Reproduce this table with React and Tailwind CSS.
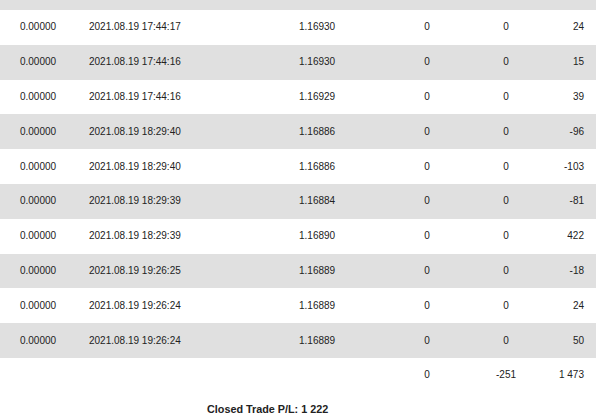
import React from "react";

const rows = [
  ["0.00000", "2021.08.19 17:44:17", "1.16930", "0", "0", "24"],
  ["0.00000", "2021.08.19 17:44:16", "1.16930", "0", "0", "15"],
  ["0.00000", "2021.08.19 17:44:16", "1.16929", "0", "0", "39"],
  ["0.00000", "2021.08.19 18:29:40", "1.16886", "0", "0", "-96"],
  ["0.00000", "2021.08.19 18:29:40", "1.16886", "0", "0", "-103"],
  ["0.00000", "2021.08.19 18:29:39", "1.16884", "0", "0", "-81"],
  ["0.00000", "2021.08.19 18:29:39", "1.16890", "0", "0", "422"],
  ["0.00000", "2021.08.19 19:26:25", "1.16889", "0", "0", "-18"],
  ["0.00000", "2021.08.19 19:26:24", "1.16889", "0", "0", "24"],
  ["0.00000", "2021.08.19 19:26:24", "1.16889", "0", "0", "50"],
];

function Row({ cells, gray }) {
  return (
    <div
      className={
        "flex items-center h-[34.8px] w-[596px] " +
        (gray ? "bg-[#e0e0e0]" : "bg-white")
      }
    >
      <div className="w-[76px] text-center">{cells[0]}</div>
      <div className="w-[150px] pl-[13px] text-left">{cells[1]}</div>
      <div className="w-[160px] pl-[73px] text-left">{cells[2]}</div>
      <div className="w-[82px] text-center">{cells[3]}</div>
      <div className="w-[76px] text-center">{cells[4]}</div>
      <div className="flex-1 pr-[12px] text-right">{cells[5]}</div>
    </div>
  );
}

export default function App() {
  return (
    <div
      className="w-[600px] h-[419px] bg-white text-[#222] text-[10px] leading-none overflow-hidden"
      style={{ fontFamily: '"Liberation Sans", Arial, sans-serif' }}
    >
      <div className="h-[10px] w-[596px] bg-[#e0e0e0]" />
      {rows.map((r, i) => (
        <Row key={i} cells={r} gray={i % 2 === 1} />
      ))}
      <Row cells={["", "", "", "0", "-251", "1 473"]} gray={false} />
      <div className="pl-[207px] pt-[11px] font-bold text-[10.8px]">
        Closed Trade P/L: 1 222
      </div>
    </div>
  );
}
